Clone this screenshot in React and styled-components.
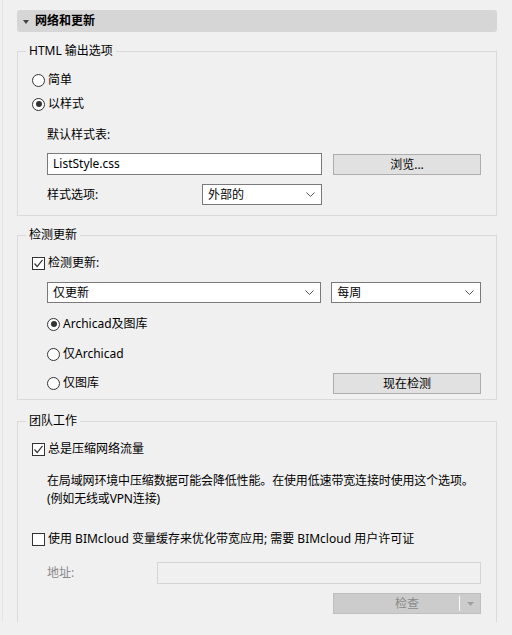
import React from 'react';
import styled, { createGlobalStyle } from 'styled-components';

const GlobalStyle = createGlobalStyle`
  html, body {
    margin: 0;
    padding: 0;
    background: #f0f0f0;
  }
  body {
    font-family: "Noto Sans", "Noto Sans CJK SC", sans-serif;
    font-size: 12px;
    color: #000;
  }
`;

const Panel = styled.div`
  width: 510px;
  height: 622px;
  overflow: hidden;
  box-sizing: border-box;
  margin-left: 2px;
  padding: 10px 15px 0 14px;
  border-left: 1px solid #e4e4e4;
`;

const Header = styled.div`
  height: 22px;
  display: flex;
  align-items: center;
  gap: 6px;
  padding-left: 6px;
  background: #d6d6d6;
  border-radius: 3px;
  font-weight: bold;
  line-height: 22px;
`;

const Triangle = styled.span`
  width: 0;
  height: 0;
  border-left: 3.5px solid transparent;
  border-right: 3.5px solid transparent;
  border-top: 4px solid #444;
  margin-top: 1px;
`;

const Group = styled.fieldset`
  margin: ${(p) => p.$top}px 0 0 0;
  padding: ${(p) => p.$padTop}px 15px ${(p) => p.$padBottom}px 14px;
  border: 1px solid #dadada;
  border-bottom: ${(p) => (p.$open ? 'none' : '1px solid #dadada')};
  min-width: 0;
  display: flex;
  flex-direction: column;
`;

const Legend = styled.legend`
  padding: 0 3px;
  margin-left: -6px;
  line-height: 16px;
  height: 16px;
`;

const Row = styled.div`
  display: flex;
  align-items: center;
  height: ${(p) => p.$h || 20}px;
  margin-top: ${(p) => p.$mt || 0}px;
  padding-left: ${(p) => p.$indent || 0}px;
  gap: ${(p) => p.$gap || 0}px;
`;

const Choice = styled.label`
  display: flex;
  align-items: center;
  gap: 3px;
  line-height: 20px;
  white-space: nowrap;
`;

const RadioMark = styled.span`
  width: 11px;
  height: 11px;
  border: 1px solid #333;
  border-radius: 50%;
  background: #fff;
  display: flex;
  align-items: center;
  justify-content: center;
  &::after {
    content: '';
    width: 6px;
    height: 6px;
    border-radius: 50%;
    background: ${(p) => (p.$on ? '#333' : 'transparent')};
  }
`;

const CheckMark = styled.span`
  width: 11px;
  height: 11px;
  border: 1px solid #333;
  background: #fff;
  display: flex;
  align-items: center;
  justify-content: center;
`;

const Label = styled.span`
  color: ${(p) => (p.$disabled ? '#8a8a8a' : '#000')};
  width: ${(p) => (p.$w ? `${p.$w}px` : 'auto')};
  line-height: 20px;
`;

const TextInput = styled.div`
  box-sizing: border-box;
  width: ${(p) => p.$w}px;
  height: 22px;
  border: 1px solid ${(p) => (p.$disabled ? '#d4d4d4' : '#7a7a7a')};
  background: ${(p) => (p.$disabled ? '#f0f0f0' : '#fff')};
  padding-left: 5px;
  line-height: 20px;
`;

const Select = styled.div`
  box-sizing: border-box;
  width: ${(p) => p.$w}px;
  height: 21px;
  border: 1px solid #7a7a7a;
  background: #fff;
  display: flex;
  align-items: center;
  justify-content: space-between;
  padding: 0 6px 0 5px;
  line-height: 19px;
`;

const Button = styled.div`
  box-sizing: border-box;
  width: 148px;
  height: 21px;
  border: 1px solid ${(p) => (p.$disabled ? '#bfbfbf' : '#adadad')};
  background: ${(p) => (p.$disabled ? '#cccccc' : '#e1e1e1')};
  color: ${(p) => (p.$disabled ? '#8a8a8a' : '#000')};
  display: flex;
  align-items: center;
  justify-content: center;
  position: relative;
  line-height: 19px;
`;

const SplitPart = styled.span`
  position: absolute;
  right: 0;
  top: 2px;
  bottom: 2px;
  width: 20px;
  border-left: 1px solid #fafafa;
  display: flex;
  align-items: center;
  justify-content: center;
`;

const Note = styled.p`
  margin: 13px 0 0 0;
  padding-left: 15px;
  line-height: 18px;
  white-space: nowrap;
  letter-spacing: -0.15px;
`;

const Spacer = styled.div`
  flex: 1;
`;

const Chevron = () => (
  <svg width="9" height="5" viewBox="0 0 9 5">
    <path d="M0.5 0.5 L4.5 4.5 L8.5 0.5" fill="none" stroke="#555" strokeWidth="1" />
  </svg>
);

const Tick = () => (
  <svg width="11" height="11" viewBox="0 0 11 11">
    <path d="M1.5 5.5 L4.2 8.5 L9.5 1.8" fill="none" stroke="#333" strokeWidth="1.2" />
  </svg>
);

function Radio({ on, children }) {
  return (
    <Choice>
      <RadioMark $on={on} />
      <span>{children}</span>
    </Choice>
  );
}

function Check({ on, children }) {
  return (
    <Choice>
      <CheckMark>{on && <Tick />}</CheckMark>
      <span>{children}</span>
    </Choice>
  );
}

export default function App() {
  return (
    <>
      <GlobalStyle />
      <Panel>
        <Header>
          <Triangle />
          网络和更新
        </Header>

        <Group $top={11} $padTop={11} $padBottom={10}>
          <Legend>HTML 输出选项</Legend>
          <Row>
            <Radio>简单</Radio>
          </Row>
          <Row $mt={4}>
            <Radio on>以样式</Radio>
          </Row>
          <Row $mt={11} $indent={15}>
            <Label>默认样式表:</Label>
          </Row>
          <Row $mt={8} $h={22} $indent={15} $gap={11}>
            <TextInput $w={275}>ListStyle.css</TextInput>
            <Button>浏览...</Button>
          </Row>
          <Row $mt={9} $h={21} $indent={15}>
            <Label $w={155}>样式选项:</Label>
            <Select $w={120}>
              外部的
              <Chevron />
            </Select>
          </Row>
        </Group>

        <Group $top={11} $padTop={10} $padBottom={6}>
          <Legend>检测更新</Legend>
          <Row>
            <Check on>检测更新:</Check>
          </Row>
          <Row $mt={9} $h={21} $indent={15} $gap={10}>
            <Select $w={275}>
              仅更新
              <Chevron />
            </Select>
            <Select $w={150}>
              每周
              <Chevron />
            </Select>
          </Row>
          <Row $mt={11} $indent={15}>
            <Radio on>Archicad及图库</Radio>
          </Row>
          <Row $mt={10} $indent={15}>
            <Radio>仅Archicad</Radio>
          </Row>
          <Row $mt={9} $indent={15}>
            <Radio>仅图库</Radio>
            <Spacer />
            <Button>现在检测</Button>
          </Row>
        </Group>

        <Group $top={13} $padTop={10} $padBottom={18} $open>
          <Legend>团队工作</Legend>
          <Row>
            <Check on>总是压缩网络流量</Check>
          </Row>
          <Note>
            在局域网环境中压缩数据可能会降低性能。在使用低速带宽连接时使用这个选项。
            <br />
            (例如无线或VPN连接)
          </Note>
          <Row $mt={21}>
            <Check>使用 BIMcloud 变量缓存来优化带宽应用; 需要 BIMcloud 用户许可证</Check>
          </Row>
          <Row $mt={13} $h={22} $indent={15}>
            <Label $disabled $w={110}>地址:</Label>
            <TextInput $w={325} $disabled />
          </Row>
          <Row $mt={9} $h={21}>
            <Spacer />
            <Button $disabled>
              检查
              <SplitPart>
                <svg width="7" height="4" viewBox="0 0 7 4">
                  <path d="M0 0 L7 0 L3.5 4 Z" fill="#a0a0a0" />
                </svg>
              </SplitPart>
            </Button>
          </Row>
        </Group>
      </Panel>
    </>
  );
}
